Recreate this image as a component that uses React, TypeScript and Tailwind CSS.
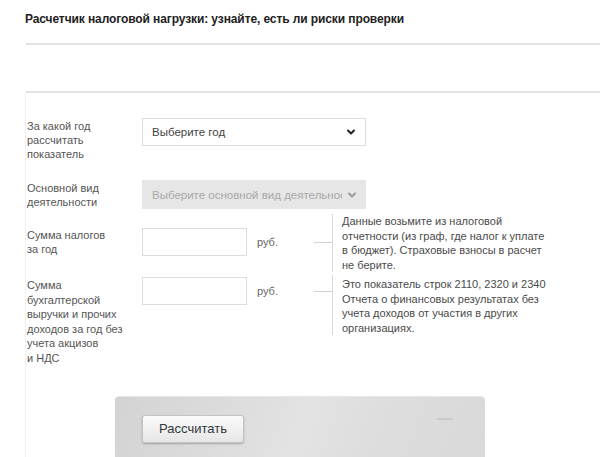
import { ChevronDown } from "lucide-react";

function FakeSelect({ text, disabled }: { text: string; disabled?: boolean }) {
  return (
    <div
      className={
        disabled
          ? "flex h-[29px] w-[224px] items-center overflow-hidden whitespace-nowrap bg-[#e6e6e6] pl-[10px] pr-[8px] text-[11.5px] text-[#a9a9a9]"
          : "flex h-[28px] w-[224px] items-center overflow-hidden whitespace-nowrap border border-[#dcdcdc] bg-white pl-[9px] pr-[8px] text-[11.5px] text-[#444]"
      }
    >
      <span className="flex-1 overflow-hidden">{text}</span>
      <ChevronDown
        className={disabled ? "ml-[4px] h-[12px] w-[12px] shrink-0 text-[#9a9a9a]" : "ml-[4px] h-[12px] w-[12px] shrink-0 text-[#222]"}
        strokeWidth={4}
      />
    </div>
  );
}

function Help({ children, extra }: { children: React.ReactNode; extra?: string }) {
  return (
    <div className={"w-[225px] whitespace-nowrap border-l border-[#d9d9d9] pl-[9px] text-[11px] leading-[14.6px] text-[#4a4a4a] " + (extra ?? "")}>
      {children}
    </div>
  );
}

export default function App() {
  return (
    <div className="h-[457px] w-[600px] overflow-hidden bg-white font-['Liberation_Sans',Arial,sans-serif]">
      <h1 className="pl-[25px] pt-[10px] text-[12px] font-bold leading-[18px] tracking-[-0.1px] text-[#222]">
        Расчетчик налоговой нагрузки: узнайте, есть ли риски проверки
      </h1>
      <div className="ml-[26px] mt-[15px] h-[2px] bg-[#e3e3e3]" />
      <div className="ml-[26px] mt-[46px] h-[2px] bg-[#e3e3e3]" />

      <div className="ml-[25px] border-l border-[#f1f1f1] pt-[25px] text-[11px] leading-[14px] text-[#555]">
        {/* год */}
        <div className="flex h-[62px] items-start">
          <div className="w-[116px] pl-[1px] pt-[1px]">
            За какой год
            <br />
            рассчитать
            <br />
            показатель
          </div>
          <FakeSelect text="Выберите год" />
        </div>

        {/* вид деятельности */}
        <div className="flex h-[34px] items-start">
          <div className="w-[116px] pl-[1px] pt-[1px]">
            Основной вид
            <br />
            деятельности
          </div>
          <FakeSelect text="Выберите основной вид деятельности" disabled />
        </div>

        {/* налоги */}
        <div className="flex h-[61px] items-start">
          <div className="mt-[14px] w-[116px] pl-[1px]">
            Сумма налогов
            <br />
            за год
          </div>
          <input className="mt-[14px] h-[28px] w-[105px] border border-[#dcdcdc] bg-white outline-none" />
          <span className="ml-[10px] mt-[21px] w-[57px] text-[11px] text-[#666]">руб.</span>
          <div className="mt-[28px] h-px w-[18px] bg-[#d0d0d0]" />
          <Help>
            Данные возьмите из налоговой
            <br />
            отчетности (из граф, где налог к уплате
            <br />
            в бюджет). Страховые взносы в расчет
            <br />
            не берите.
          </Help>
        </div>

        {/* выручка */}
        <div className="flex items-start">
          <div className="mt-[3px] w-[116px] pl-[1px] leading-[14.6px]">
            Сумма
            <br />
            бухгалтерской
            <br />
            выручки и прочих
            <br />
            доходов за год без
            <br />
            учета акцизов
            <br />и НДС
          </div>
          <input className="mt-[2px] h-[28px] w-[105px] border border-[#dcdcdc] bg-white outline-none" />
          <span className="ml-[10px] mt-[9px] w-[57px] text-[11px] text-[#666]">руб.</span>
          <div className="mt-[16px] h-px w-[18px] bg-[#d0d0d0]" />
          <Help extra="pt-[2px]">
            Это показатель строк 2110, 2320 и 2340
            <br />
            Отчета о финансовых результатах без
            <br />
            учета доходов от участия в других
            <br />
            организациях.
          </Help>
        </div>

        <div className="ml-[89px] mt-[30px] flex h-[70px] w-[370px] items-start rounded-t-[4px] border-t border-[#e6e6e6] bg-[linear-gradient(110deg,#d3d3d3_0%,#dcdcdc_30%,#e3e3e3_50%,#dddddd_70%,#d9d9d9_100%)] pl-[27px] pt-[18px]">
          <button className="h-[28px] w-[102px] rounded-[3px] border border-[#c4c4c4] bg-[linear-gradient(#fbfbfb,#e6e6e6)] text-[13px] text-[#2f3a3a] shadow-[0_1px_2px_rgba(0,0,0,0.25)]">
            Рассчитать
          </button>
          <div className="ml-auto mr-[32px] mt-[3px] h-[2px] w-[16px] bg-[#cacaca]" />
        </div>
      </div>
    </div>
  );
}
